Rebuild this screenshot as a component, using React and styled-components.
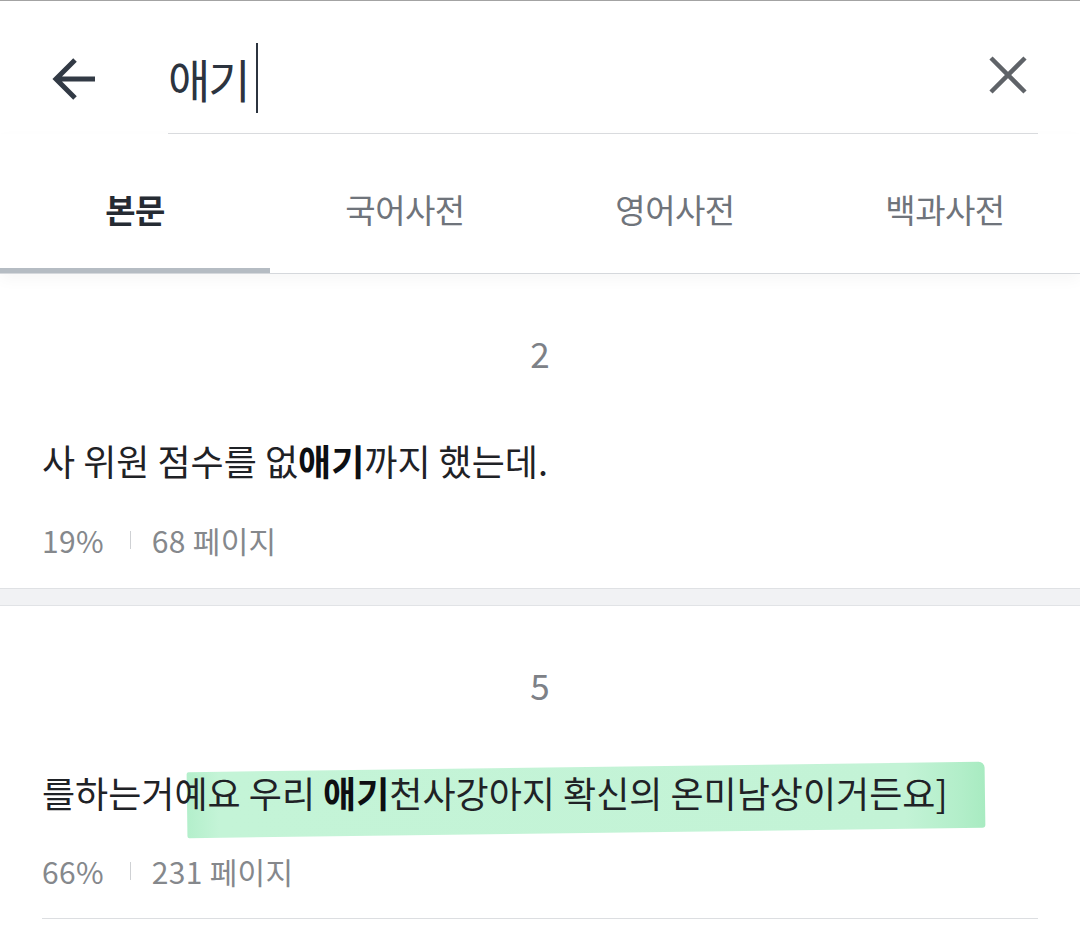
import React from "react";
import styled, { createGlobalStyle } from "styled-components";

const GlobalStyle = createGlobalStyle`
  html, body { margin: 0; padding: 0; background: #ffffff; }
  body {
    font-family: "Noto Sans CJK KR", "Noto Sans", sans-serif;
    -webkit-font-smoothing: antialiased;
  }
  * { box-sizing: border-box; }
`;

const Page = styled.div`
  width: 1080px;
  min-height: 935px;
  background: #fff;
  border-top: 1px solid #a3a3a3;
  overflow: hidden;
`;

const Header = styled.header`
  display: flex;
  height: 133px;
  padding: 0 42px 0 50px;
`;

const BackButton = styled.button`
  width: 118px;
  border: 0;
  background: none;
  padding: 22px 0 0 0;
  display: flex;
  align-items: center;
  color: #323a45;
  cursor: pointer;
`;

const SearchField = styled.div`
  flex: 1;
  display: flex;
  align-items: center;
  padding-top: 22px;
  border-bottom: 1px solid #dadcdf;
`;

const Query = styled.span`
  font-size: 46px;
  letter-spacing: -2px;
  color: #2c343f;
  line-height: 1;
`;

const Caret = styled.span`
  display: inline-block;
  width: 2px;
  height: 70px;
  margin-left: 7px;
  background: #2c343f;
`;

const ClearButton = styled.button`
  margin-left: auto;
  margin-right: 10px;
  border: 0;
  background: none;
  padding: 0;
  display: flex;
  color: #5f6368;
  transform: translateY(-3px);
`;

const TabBar = styled.nav`
  display: flex;
  border-bottom: 1px solid #d5d8dc;
  box-shadow: 0 6px 14px rgba(0, 0, 0, 0.035);
  position: relative;
`;

const Tab = styled.div`
  flex: 1;
  height: 139px;
  display: flex;
  align-items: center;
  justify-content: center;
  padding-top: 16px;
  font-size: 33px;
  letter-spacing: -0.5px;
  color: ${(p) => (p.$active ? "#262b33" : "#6f747b")};
  font-weight: ${(p) => (p.$active ? 700 : 400)};
  border-bottom: 5px solid ${(p) => (p.$active ? "#b5bcc3" : "transparent")};
`;

const Result = styled.section`
  padding: 0 42px;
`;

const ResultInner = styled.div`
  display: flex;
  flex-direction: column;
  padding: ${(p) => p.$top}px 0 ${(p) => p.$bottom}px;
  border-bottom: ${(p) => (p.$lined ? "1px solid #dcdee1" : "0")};
`;

const ChapterNo = styled.div`
  text-align: center;
  font-size: 35px;
  line-height: 48px;
  color: #7d8187;
`;

const Snippet = styled.p`
  position: relative;
  isolation: isolate;
  margin: 58px 0 0;
  font-size: 36px;
  line-height: 50px;
  letter-spacing: 0;
  color: #1f2226;
  white-space: nowrap;
`;

const Keyword = styled.b`
  font-weight: 700;
  color: #0d0f12;
`;

const Highlight = styled.span`
  position: absolute;
  z-index: -1;
  left: 145px;
  top: 0;
  width: 798px;
  height: 66px;
  transform: rotate(-0.75deg);
  background: linear-gradient(
    90deg,
    #b3efcb 0%,
    #c4f4d7 4%,
    #c3f3d6 90%,
    #b2eec9 97%,
    #a8ebc1 100%
  );
  border-radius: 2px 6px 3px 2px;
`;

const Meta = styled.div`
  display: flex;
  align-items: center;
  margin-top: ${(p) => p.$gap}px;
  font-size: 30px;
  line-height: 40px;
  color: #85888c;
  letter-spacing: 0.3px;
`;

const MetaDivider = styled.span`
  width: 1px;
  height: 18px;
  background: #cfd1d4;
  margin: 0 21px 0 26px;
`;

const Band = styled.div`
  height: 18px;
  background: #f1f2f4;
  border-top: 1px solid #dfe1e4;
  border-bottom: 1px solid #e1e3e6;
`;

const ArrowIcon = () => (
  <svg width="48" height="48" viewBox="0 0 48 48" fill="none">
    <path
      d="M45 24H6M25 5L6 24l19 19"
      stroke="currentColor"
      strokeWidth="5"
      strokeLinecap="butt"
      strokeLinejoin="miter"
    />
  </svg>
);

const CloseIcon = () => (
  <svg width="40" height="40" viewBox="0 0 40 40" fill="none">
    <path d="M3 3l34 34M37 3L3 37" stroke="currentColor" strokeWidth="4.5" />
  </svg>
);

const tabs = ["본문", "국어사전", "영어사전", "백과사전"];

export default function App() {
  return (
    <Page>
      <GlobalStyle />
      <Header>
        <BackButton aria-label="뒤로">
          <ArrowIcon />
        </BackButton>
        <SearchField>
          <Query>애기</Query>
          <Caret />
          <ClearButton aria-label="지우기">
            <CloseIcon />
          </ClearButton>
        </SearchField>
      </Header>

      <TabBar>
        {tabs.map((t, i) => (
          <Tab key={t} $active={i === 0}>
            {t}
          </Tab>
        ))}
      </TabBar>

      <Result>
        <ResultInner $top={55} $bottom={28}>
          <ChapterNo>2</ChapterNo>
          <Snippet>
            사 위원 점수를 없<Keyword>애기</Keyword>까지 했는데.
          </Snippet>
          <Meta $gap={35}>
            19%
            <MetaDivider />
            68 페이지
          </Meta>
        </ResultInner>
      </Result>

      <Band />

      <Result>
        <ResultInner $top={55} $bottom={27} $lined>
          <ChapterNo>5</ChapterNo>
          <Snippet>
            <Highlight />
            를하는거예요 우리 <Keyword>애기</Keyword>천사강아지 확신의
            온미남상이거든요]
          </Snippet>
          <Meta $gap={34}>
            66%
            <MetaDivider />
            231 페이지
          </Meta>
        </ResultInner>
      </Result>
    </Page>
  );
}
